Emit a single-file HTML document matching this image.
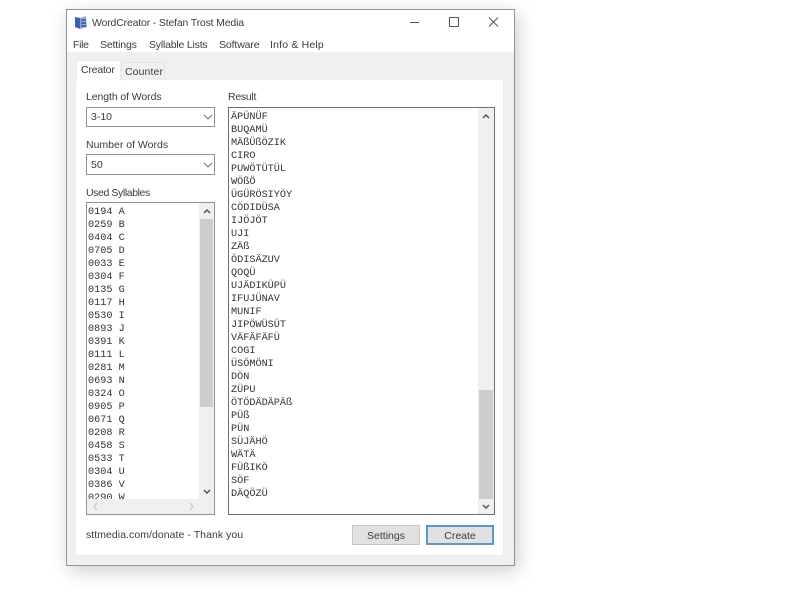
<!DOCTYPE html>
<html><head><meta charset="utf-8"><style>
html,body{margin:0;padding:0;background:#fff;width:800px;height:600px;overflow:hidden}
body{position:relative;font-family:"Liberation Sans",sans-serif;font-size:10.5px;color:#3c3c3c}
div{position:absolute;box-sizing:border-box}
.t{white-space:nowrap;line-height:14px;filter:blur(.35px)}
.box{background:#fff;border:1px solid #929292}
.m{font-family:"Liberation Mono",monospace;font-size:10.2px;line-height:13px;white-space:pre;color:#333;filter:blur(.35px)}
.btn{background:#e1e1e1;border:1px solid #c4c4c4;text-align:center;line-height:20px;filter:blur(.3px)}
svg{position:absolute;overflow:visible;filter:blur(.25px)}
</style></head><body>
<div style="left:66px;top:9px;width:449px;height:557px;background:#f0f0f0;border:1px solid #949494;box-shadow:3px 5px 18px rgba(0,0,0,.2)"></div>
<div style="left:67px;top:10px;width:447px;height:42px;background:#fff"></div>
<svg style="left:73px;top:15px" width="16" height="16" viewBox="0 0 16 16"><path d="M2 2l5 1v11l-5-2z" fill="#3c5fb0"/><path d="M7 3l6-2 1 11-7 2z" fill="#8fa6de"/><path d="M8 5h5M8 8h5M8 11h5" stroke="#1d2f78" fill="none"/></svg>
<div class="t" style="left:92px;top:16px;letter-spacing:-.17px">WordCreator - Stefan Trost Media</div>
<svg style="left:410px;top:16px" width="90" height="14" fill="none" stroke="#555"><path d="M0 6.500h9"/><rect x="39.500" y="1.500" width="9" height="9"/><path d="M79 1.500l9 9M88 1.500l-9 9"/></svg>
<div class="t" style="left:73px;top:38px;letter-spacing:-.3px">File</div>
<div class="t" style="left:100px;top:38px;letter-spacing:-.15px">Settings</div>
<div class="t" style="left:149px;top:38px;letter-spacing:-.2px">Syllable Lists</div>
<div class="t" style="left:219px;top:38px;letter-spacing:-.12px">Software</div>
<div class="t" style="left:270px;top:38px;letter-spacing:.18px">Info &amp; Help</div>
<div style="left:75px;top:79px;width:429px;height:477px;background:#fff;border:1px solid #ececec"></div>
<div style="left:121px;top:62px;width:44px;height:18px;background:#f0f0f0;border:1px solid #e6e6e6;border-bottom:0"></div>
<div style="left:76px;top:60px;width:45px;height:21px;background:#fff;border:1px solid #ececec;border-bottom:0"></div>
<div class="t" style="left:81px;top:63px;letter-spacing:-.2px">Creator</div>
<div class="t" style="left:125px;top:65px;letter-spacing:.1px">Counter</div>
<div class="t" style="left:86px;top:90px;letter-spacing:-.09px">Length of Words</div>
<div class="t" style="left:228px;top:90px;letter-spacing:-.27px">Result</div>
<div class="box" style="left:86px;top:107px;width:129px;height:20px"></div>
<div class="t" style="left:91px;top:110px">3-10</div>
<svg style="left:203px;top:114px" width="10" height="6" fill="none" stroke="#777"><path d="M1 1l4 4 4-4"/></svg>
<div class="t" style="left:86px;top:138px">Number of Words</div>
<div class="box" style="left:86px;top:154px;width:129px;height:21px"></div>
<div class="t" style="left:91px;top:158px">50</div>
<svg style="left:203px;top:162px" width="10" height="6" fill="none" stroke="#777"><path d="M1 1l4 4 4-4"/></svg>
<div class="t" style="left:86px;top:186px;letter-spacing:-.4px">Used Syllables</div>
<div class="box" style="left:86px;top:202px;width:129px;height:313px"></div>
<div style="left:87px;top:203px;width:112px;height:296px;overflow:hidden"><div class="m" style="left:1px;top:3px">0194 A
0259 B
0404 C
0705 D
0033 E
0304 F
0135 G
0117 H
0530 I
0893 J
0391 K
0111 L
0281 M
0693 N
0324 O
0905 P
0671 Q
0208 R
0458 S
0533 T
0304 U
0386 V
0290 W</div></div>
<div style="left:199px;top:203px;width:15px;height:296px;background:#f0f0f0"></div>
<div style="left:200px;top:219px;width:13px;height:188px;background:#cdcdcd"></div>
<svg style="left:203px;top:209px" width="8" height="5" fill="none" stroke="#555" stroke-width="1.500"><path d="M1 4l3-3 3 3"/></svg>
<svg style="left:203px;top:489px" width="8" height="5" fill="none" stroke="#555" stroke-width="1.500"><path d="M1 1l3 3 3-3"/></svg>
<div style="left:87px;top:499px;width:127px;height:15px;background:#f0f0f0"></div>
<svg style="left:92px;top:502px" width="120" height="9" fill="none" stroke="#c8c8c8" stroke-width="1.200"><path d="M5 1L2 4.500l3 3.500M98 1l3 3.500-3 3.500"/></svg>
<div class="box" style="left:228px;top:107px;width:267px;height:408px;border-color:#6e6e6e"></div>
<div class="m" style="left:231px;top:111px">ÄPÜNÜF
BUQAMÜ
MÄßÜßÖZIK
CIRO
PUWÖTÜTÜL
WÖßÖ
ÜGÜRÖSIYÖY
CÖDIDÜSA
IJÖJÖT
UJI
ZÄß
ÖDISÄZUV
QOQÜ
UJÄDIKÜPÜ
IFUJÜNAV
MUNIF
JIPÖWÜSÜT
VÄFÄFÄFÜ
COGI
ÜSÖMÖNI
DÖN
ZÜPU
ÖTÖDÄDÄPÄß
PÜß
PÜN
SÜJÄHÖ
WÄTÄ
FÜßIKÖ
SÖF
DÄQÖZÜ</div>
<div style="left:478px;top:108px;width:16px;height:406px;background:#f0f0f0"></div>
<div style="left:479px;top:390px;width:14px;height:109px;background:#cdcdcd"></div>
<svg style="left:482px;top:114px" width="8" height="5" fill="none" stroke="#555" stroke-width="1.500"><path d="M1 4l3-3 3 3"/></svg>
<svg style="left:482px;top:504px" width="8" height="5" fill="none" stroke="#555" stroke-width="1.500"><path d="M1 1l3 3 3-3"/></svg>
<div class="t" style="left:86px;top:528px;letter-spacing:.05px">sttmedia.com/donate - Thank you</div>
<div class="btn" style="left:352px;top:525px;width:68px;height:20px">Settings</div>
<div class="btn" style="left:426px;top:525px;width:68px;height:20px;border:2px solid #5a98cc;line-height:18px">Create</div>
</body></html>
